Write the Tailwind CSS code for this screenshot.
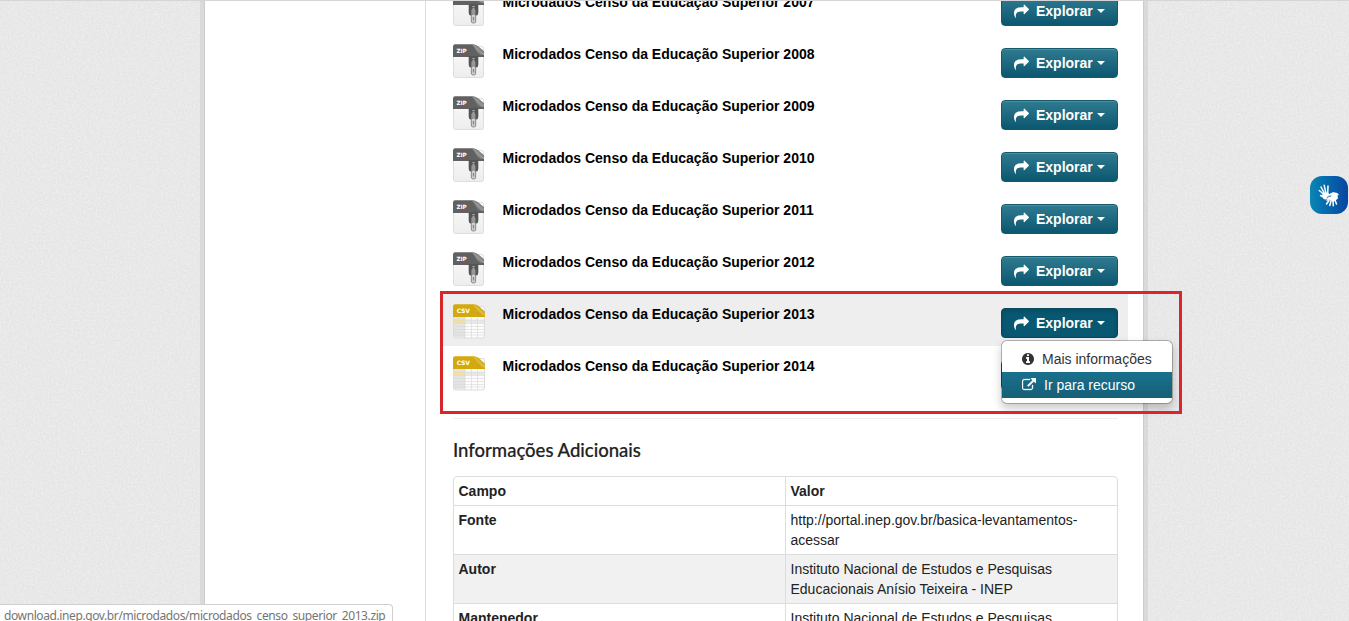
<!DOCTYPE html>
<html lang="pt-BR">
<head>
<meta charset="utf-8">
<title>Microdados Censo da Educação Superior</title>
<script src="https://cdn.jsdelivr.net/npm/@tailwindcss/browser@4"></script>
</head>
<body class="relative h-[621px] overflow-hidden bg-[#e5e5e5] font-['Liberation_Sans',Arial,sans-serif] text-sm leading-5 text-[#222]">
<svg class="absolute inset-0 h-full w-full opacity-55" aria-hidden="true">
  <filter id="grain"><feTurbulence type="fractalNoise" baseFrequency="0.5" numOctaves="2" seed="4"/><feColorMatrix values="0 0 0 0 1  0 0 0 0 1  0 0 0 0 1  1.2 0 0 0 -0.35"/></filter>
  <rect width="100%" height="100%" filter="url(#grain)"/>
</svg>
<svg class="absolute size-0" aria-hidden="true">
  <defs>
    <linearGradient id="paper" x1="0" y1="0" x2="0" y2="1"><stop offset="0" stop-color="#fbfbfb"/><stop offset="1" stop-color="#ededed"/></linearGradient>
    <linearGradient id="fold" x1="0" y1="1" x2="1" y2="0"><stop offset=".2" stop-color="#4a4a4a"/><stop offset=".5" stop-color="#999"/><stop offset=".8" stop-color="#666"/></linearGradient>
    <linearGradient id="foldcsv" x1="0" y1="1" x2="1" y2="0"><stop offset=".2" stop-color="#b18a00"/><stop offset=".5" stop-color="#dfbd40"/><stop offset=".8" stop-color="#c09300"/></linearGradient>
    <symbol id="zip" viewBox="0 0 32 35">
      <rect x=".5" y="2.500" width="30" height="31" rx="2" fill="url(#paper)" stroke="#dedede"/>
      <path d="M0 13V2.500Q0 .3 2.200.3H19Q22 .3 24.500 2L31 7.500V13Z" fill="#616161"/>
      <path d="M18.500.3Q22 .3 24.500 2L31 7.500V11Q27 11.500 24 9.500Q22.500 3.500 18.500.3Z" fill="url(#fold)"/>
      <path d="M15.700 12h9.600v8.500q0 2.500-2 3h-5.600q-2-.5-2-3Z" fill="#555"/>
      <path d="M20.500 14v10" stroke="#bbb" stroke-width="2" stroke-dasharray="1 .8"/>
      <rect x="18.400" y="17" width="4" height="6" rx="1.500" fill="#999"/>
      <rect x="18.300" y="22" width="4.400" height="9" rx="2" fill="#cfcfcf" stroke="#888" stroke-width="1"/>
      <path d="M20.500 25v3.500" stroke="#888" stroke-width="1.300"/>
      <text x="3.600" y="8.900" font-family="DejaVu Sans,sans-serif" font-size="5.700" font-weight="bold" fill="#fff" textLength="10">ZIP</text>
    </symbol>
    <symbol id="csv" viewBox="0 0 32 35">
      <rect x=".5" y="2.500" width="31" height="31.500" rx="2" fill="#fcfcfc" stroke="#dcdcdc"/>
      <path d="M1 13h11v20.500H2.500Q1 33.500 1 32Z" fill="#e4e4e4"/>
      <path d="M12 16h19v3H12Z" fill="#e8e8e8"/>
      <path d="M1 16h11v3H1Z" fill="#f5dfa0"/>
      <path d="M1 16h30M1 19.500h30M1 22.500h30M1 25.500h30M1 28.500h30M1 31h30M12 13v21M18.500 13v21M24.500 13v21" stroke="#d6d6d6" stroke-width=".6" fill="none"/>
      <path d="M0 13V2.500Q0 .3 2.200.3H20Q23 .3 25.500 2L32 8V13Z" fill="#d3a90c"/>
      <path d="M19.500.3Q23 .3 25.500 2L32 8V11.500Q28 12 25 10Q23.500 4 19.500.3Z" fill="url(#foldcsv)"/>
      <text x="3.800" y="9" font-family="DejaVu Sans,sans-serif" font-size="6" font-weight="bold" fill="#fff" textLength="13">CSV</text>
    </symbol>
    <symbol id="share" viewBox="0 0 1792 1792"><path fill="currentColor" d="M1792 640q0 26-19 45l-512 512q-19 19-45 19t-45-19-19-45v-256h-224q-98 0-175.500 6t-154 21.500-133 42.500-105.500 69.500-80 101-48.500 138.500-17.500 181q0 55 5 123 0 6 2.500 23.500t2.500 26.500q0 15-8.500 25t-23.500 10q-16 0-28-17-7-9-13-22t-13.500-30-10.500-24q-127-285-127-451 0-199 53-333 162-403 875-403h224v-256q0-26 19-45t45-19 45 19l512 512q19 19 19 45z"/></symbol>
  </defs>
</svg>

<main class="relative ml-[200px] flex h-full w-[948px] overflow-hidden border-x-4 border-[#dadada]">
  <div class="flex w-full border-x border-[#ccc] bg-white">
    <aside class="w-[221px] shrink-0 border-r border-[#ddd]"></aside>
    <section class="-mt-[18px] min-w-0 flex-1 pr-[25px] pl-[27px]">
      <ul id="list" class="-mr-[10px] -ml-[10px]"></ul>
      <hr class="mt-5 border-[#eee]">
      <h2 class="mt-[18px] font-[Lato] text-[18.500px] leading-[26px] font-medium [-webkit-text-stroke:0.2px_#222]">Informações Adicionais</h2>
      <div class="mt-[13px] overflow-hidden rounded border border-[#ddd]">
        <div class="-ml-px grid grid-cols-[332px_1fr] *:py-1 *:odd:pl-[5.500px] *:even:pl-[4.500px]">
          <b>Campo</b><b class="border-l border-[#ddd]">Valor</b>
          <b class="border-t border-[#ddd]">Fonte</b><span class="border-t border-l border-[#ddd]">http://portal.inep.gov.br/basica-levantamentos-<br>acessar</span>
          <b class="border-t border-[#ddd] bg-[#f1f1f1]">Autor</b><span class="border-t border-l border-[#ddd] bg-[#f1f1f1]">Instituto Nacional de Estudos e Pesquisas<br>Educacionais Anísio Teixeira - INEP</span>
          <b class="border-t border-[#ddd]">Mantenedor</b><span class="border-t border-l border-[#ddd]">Instituto Nacional de Estudos e Pesquisas</span>
        </div>
      </div>
    </section>
  </div>
</main>

<div class="absolute top-[340px] left-[1001px] w-[172px] rounded-md border border-black/25 bg-white bg-clip-padding py-[5px] shadow-[0_5px_10px_rgba(0,0,0,0.2)]">
  <div class="flex h-[26px] items-center pl-5 text-[#333]">
    <svg class="mr-2 h-[14px] w-3" viewBox="128 0 1536 1792"><path fill="currentColor" d="M1152 1376v-160q0-14-9-23t-23-9h-96v-512q0-14-9-23t-23-9h-320q-14 0-23 9t-9 23v160q0 14 9 23t23 9h96v320h-96q-14 0-23 9t-9 23v160q0 14 9 23t23 9h448q14 0 23-9t9-23zm-128-896v-160q0-14-9-23t-23-9h-192q-14 0-23 9t-9 23v160q0 14 9 23t23 9h192q14 0 23-9t9-23zm640 416q0 209-103 385.500t-279.500 279.500-385.500 103-385.500-103-279.500-279.500-103-385.500 103-385.500 279.500-279.500 385.500-103 385.500 103 279.500 279.500 103 385.500z"/></svg>Mais informações
  </div>
  <div class="flex h-[26px] items-center bg-linear-to-b from-[#19718d] to-[#165f77] pl-5 text-white">
    <svg class="mr-2 size-[14px]" viewBox="0 0 1792 1792"><path fill="currentColor" stroke="currentColor" stroke-width="40" d="M1408 928v320q0 119-84.500 203.500t-203.500 84.500h-832q-119 0-203.500-84.500t-84.500-203.500v-832q0-119 84.500-203.500t203.500-84.500h704q14 0 23 9t9 23v64q0 14-9 23t-23 9h-704q-66 0-113 47t-47 113v832q0 66 47 113t113 47h832q66 0 113-47t47-113v-320q0-14 9-23t23-9h64q14 0 23 9t9 23zm384-864v512q0 26-19 45t-45 19-45-19l-176-176-652 652q-10 10-23 10t-23-10l-114-114q-10-10-10-23t10-23l652-652-176-176q-19-19-19-45t19-45 45-19h512q26 0 45 19t19 45z"/></svg>Ir para recurso
  </div>
</div>
<div class="absolute top-[291px] left-[440px] h-[123px] w-[742px] border-3 border-[#d9252c]"></div>

<div class="absolute top-[176px] left-[1310px] flex h-[38px] w-[38px] items-center justify-center rounded-[12px] bg-linear-to-r from-[#0c86b5] to-[#0b45a0]">
  <svg class="size-[38px]" viewBox="0 0 38 38" fill="none" stroke="#fff" stroke-linecap="round">
    <path d="M12.500 18.500q3-2.500 5.500-1.500l1.500 2-2.500 4q-3.500 1-4.500-2Z" fill="#fff" stroke-width=".5"/>
    <path d="M14 18.500L9.300 14.500M14.500 17.500L11 11M16 17.500L14.200 9.300M17.700 18L18 10M12.500 20.500L10.500 19.500" stroke-width="1.500"/>
    <path d="M20 18q3-2.500 7-.5l.5 5-4 3-4.500-2-2 1Z" fill="#fff" stroke-width=".8"/>
    <path d="M19 24.500L16.500 28M21 25L19.800 29.500M23 25L23.300 29.800M25 24L26.500 28M21 18.500l-3.500 1.500M26.500 17.500l1.500 1" stroke-width="1.500"/>
    <path d="M17 21.500q1.500-2 4-1.500" stroke="#0c60a8" stroke-width=".9"/>
  </svg>
</div>

<div class="absolute top-[604px] left-[-1px] h-[17px] w-[394px] overflow-hidden rounded-tr border border-b-0 border-[#cfcfcf] bg-white pt-[3px] pl-1 font-['Noto_Sans'] text-xs leading-4 tracking-[-0.4px] whitespace-nowrap text-[#757575]">download.inep.gov.br/microdados/microdados_censo_superior_2013.zip</div>
<div class="absolute inset-x-0 top-0 h-px bg-[#d5d5d5]"></div>

<script>
  document.getElementById('list').innerHTML = [2007, 2008, 2009, 2010, 2011, 2012, 2013, 2014].map(y => `
    <li class="flex h-[52px] items-start pt-[10px] pr-[10px] pl-[10px] ${y === 2013 ? 'bg-[#eee]' : ''}">
      <svg class="h-[35px] w-8 shrink-0"><use href="#${y > 2012 ? 'csv' : 'zip'}"/></svg>
      <b class="ml-[17.500px] flex-1 whitespace-nowrap text-black">Microdados Censo da Educação Superior ${y}</b>
      <div class="mt-1 flex h-[30px] w-[117px] shrink-0 items-center rounded border pl-3 font-bold text-white ${y === 2013 ? 'border-[#074a5d] bg-[#085871] shadow-[inset_0_2px_4px_rgba(0,0,0,0.15)]' : 'border-[#17596c] bg-linear-to-b from-[#2f7b90] to-[#0a5770] shadow-[inset_0_1px_0_rgba(255,255,255,0.15)]'}">
        <svg class="mr-[7px] size-[15px]"><use href="#share"/></svg>Explorar<i class="ml-1 border-x-4 border-t-4 border-x-transparent border-t-white"></i>
      </div>
    </li>`).join('');
</script>
</body>
</html>
